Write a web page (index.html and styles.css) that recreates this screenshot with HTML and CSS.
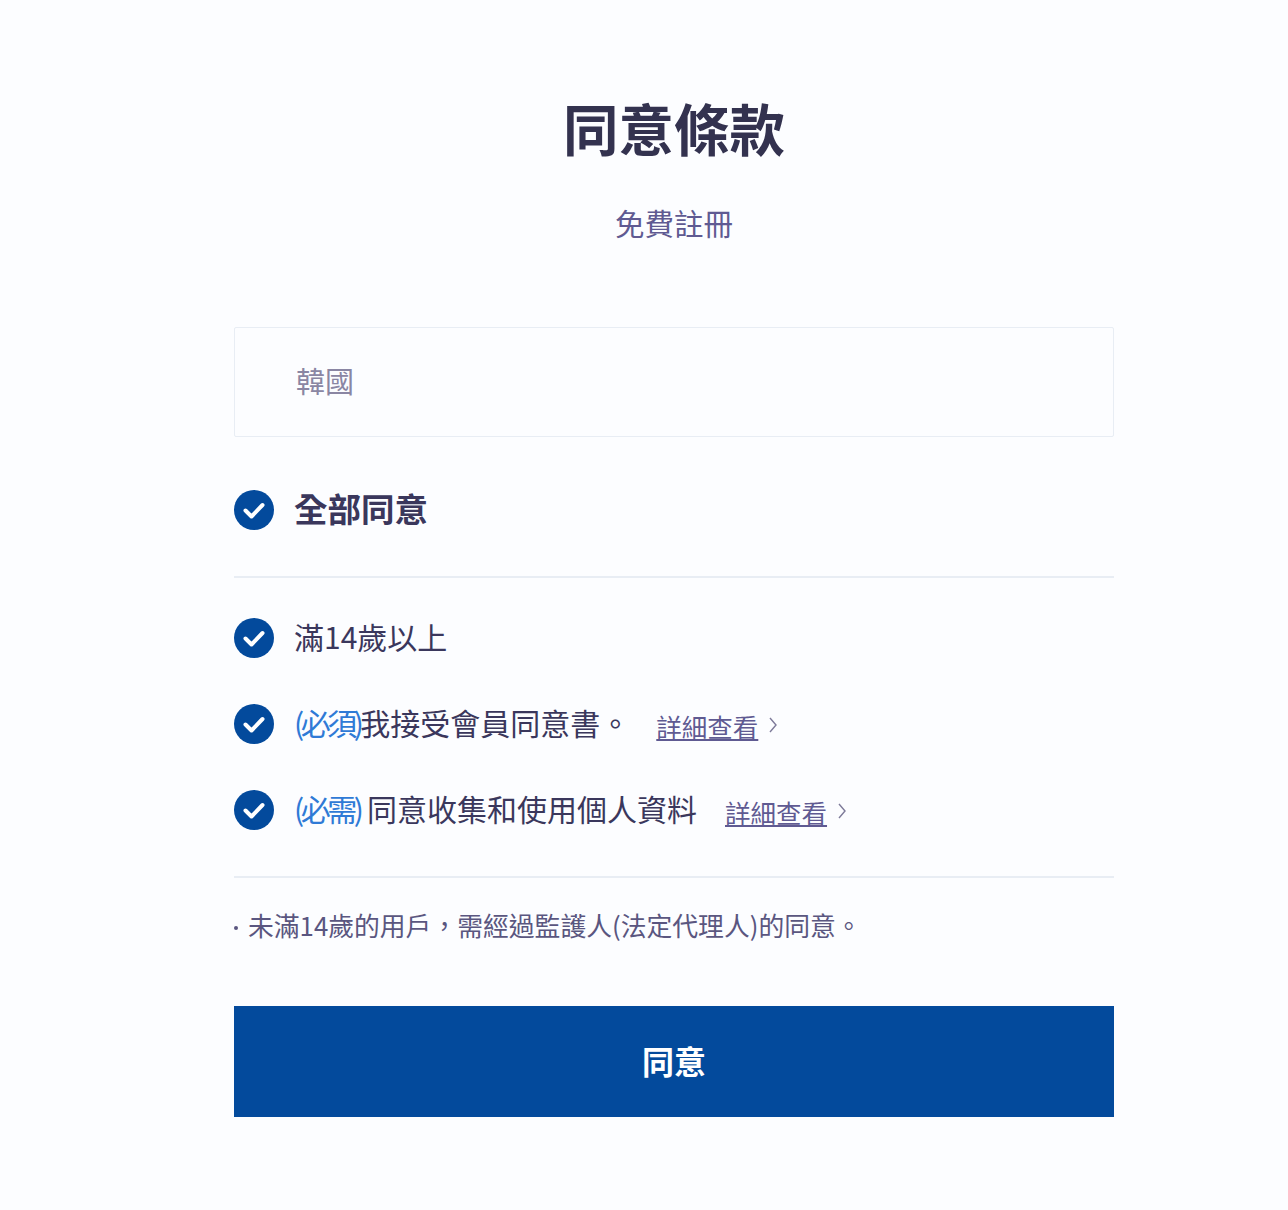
FILE: index.html
```html
<!DOCTYPE html>
<html lang="zh-Hant">
<head>
  <meta charset="utf-8">
  <title>同意條款</title>
  <link rel="stylesheet" href="styles.css">
</head>
<body>
  <div class="page">
    <h1>同意條款</h1>
    <p class="subtitle">免費註冊</p>

    <div class="country">韓國</div>

    <div class="check-row all">
      <svg class="check" viewBox="0 0 40 40"><circle cx="20" cy="20" r="20"/><path d="M11.5 20.5l6 6L28.5 15"/></svg>
      <span>全部同意</span>
    </div>

    <div class="terms">
      <div class="check-row">
        <svg class="check" viewBox="0 0 40 40"><circle cx="20" cy="20" r="20"/><path d="M11.5 20.5l6 6L28.5 15"/></svg>
        <span>滿14歲以上</span>
      </div>
      <div class="check-row">
        <svg class="check" viewBox="0 0 40 40"><circle cx="20" cy="20" r="20"/><path d="M11.5 20.5l6 6L28.5 15"/></svg>
        <span><em>(必須)</em>我接受會員同意書。</span>
        <a class="more" href="#">詳細查看</a>
        <svg class="arrow" viewBox="0 0 8 16"><path d="M1 1l6 7-6 7"/></svg>
      </div>
      <div class="check-row">
        <svg class="check" viewBox="0 0 40 40"><circle cx="20" cy="20" r="20"/><path d="M11.5 20.5l6 6L28.5 15"/></svg>
        <span><em>(必需)</em> 同意收集和使用個人資料</span>
        <a class="more wide" href="#">詳細查看</a>
        <svg class="arrow" viewBox="0 0 8 16"><path d="M1 1l6 7-6 7"/></svg>
      </div>
    </div>

    <p class="note"><i></i>未滿14歲的用戶，需經過監護人(法定代理人)的同意。</p>

    <button class="submit-btn" type="button">同意</button>
  </div>
</body>
</html>
```

FILE: styles.css
```css
* {
  box-sizing: border-box;
}

body {
  margin: 0;
  background-color: #fcfdff;
  font-family: "Noto Sans CJK TC", "Noto Sans", sans-serif;
  color: #2f2d50;
}

.page {
  width: 880px;
  height: 1210px;
  margin-left: 234px;
  padding-top: 91px;
}

h1 {
  margin: 0;
  font-size: 55.5px;
  line-height: 72px;
  font-weight: 700;
  text-align: center;
  color: #33324f;
}

.subtitle {
  margin: 41px 0 0;
  font-size: 29.5px;
  line-height: 36px;
  text-align: center;
  color: #5f5a92;
}

.country {
  height: 110px;
  margin-top: 87px;
  padding-left: 61px;
  border: 1px solid #e8edf4;
  border-radius: 2px;
  background-color: #fcfdff;
  font-size: 29px;
  line-height: 105px;
  color: #8a86a3;
}

.check-row {
  display: flex;
  align-items: center;
  height: 40px;
  font-size: 30px;
  color: #3a375c;
}

.check-row span {
  margin-left: 20px;
  margin-bottom: 5px;
  white-space: nowrap;
}

.check-row em {
  font-style: normal;
  letter-spacing: -3.5px;
  color: #2f7ad6;
}

.check-row.all {
  margin-top: 53px;
  font-size: 33.5px;
  font-weight: 700;
}

.check {
  flex: none;
  width: 40px;
  height: 40px;
}

.check circle {
  fill: #034a9c;
}

.check path {
  fill: none;
  stroke: #fff;
  stroke-width: 4;
  stroke-linecap: round;
  stroke-linejoin: round;
}

.terms {
  display: flex;
  flex-direction: column;
  gap: 46px;
  margin-top: 46px;
  padding: 40px 0 46px;
  border-top: 2px solid #e8edf4;
  border-bottom: 2px solid #e8edf4;
}

.more {
  margin-left: 26px;
  margin-top: 2px;
  font-size: 25.5px;
  color: #5f5a92;
  text-decoration: underline;
}

.more.wide {
  margin-left: 28px;
}

.arrow {
  width: 8px;
  height: 16px;
  margin-left: 11px;
  margin-top: 2px;
}

.arrow path {
  fill: none;
  stroke: #7d7a99;
  stroke-width: 1.4;
}

.note {
  display: flex;
  align-items: center;
  margin: 29px 0 0;
  font-size: 25.8px;
  line-height: 36px;
  white-space: nowrap;
  color: #5a5680;
}

.note i {
  width: 4px;
  height: 4px;
  margin-right: 10px;
  margin-top: 6px;
  border-radius: 50%;
  background-color: #5a5680;
}

.submit-btn {
  display: block;
  width: 100%;
  height: 111px;
  margin-top: 63px;
  padding-bottom: 5px;
  border: none;
  background-color: #034a9c;
  font-family: inherit;
  font-size: 32px;
  font-weight: 700;
  color: #ffffff;
}
```
